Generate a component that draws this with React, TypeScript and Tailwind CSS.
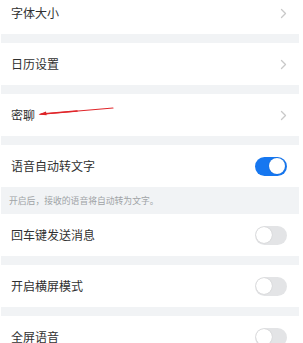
import React from "react";

const Chevron = () => (
    <svg width="7" height="11" viewBox="0 0 7 11" fill="none">
        <path d="M1.5 1.5 L5.5 5.5 L1.5 9.5" stroke="#c9c9c9" strokeWidth="1.3" strokeLinecap="round" strokeLinejoin="round" />
    </svg>
);

const Toggle = ({ on }: { on: boolean }) => (
    <div
        className={
            on
                ? "w-[32px] h-[19px] rounded-full bg-[#1677f0] flex items-center justify-end px-[2px]"
                : "w-[32px] h-[19px] rounded-full bg-[#e3e4e6] flex items-center justify-start px-[1px]"
        }
    >
        <div className="w-[16px] h-[16px] rounded-full bg-white shadow-[0_0_1px_rgba(0,0,0,0.25)]" />
    </div>
);

const Row = ({ label, right, extra }: { label: string; right: React.ReactNode; extra?: React.ReactNode }) => (
    <div className="relative h-[42px] bg-white flex items-center justify-between pl-[10px] pr-[12px]">
        <span className="text-[12px] text-[#303030]">{label}</span>
        {extra}
        {right}
    </div>
);

const Gap = () => <div className="h-[9px]" />;

const RedArrow = () => (
    <svg className="absolute left-[36px] top-[12px]" width="80" height="12" viewBox="0 0 80 12" fill="none">
        <path d="M3 8.2 L76 2" stroke="#e0262a" strokeWidth="1.1" strokeLinecap="round" />
        <path d="M1.5 8.4 L9 5.6 L9.6 9.2 Z" fill="#d81e22" />
        <path d="M5 8 L40 5" stroke="#e0262a" strokeWidth="1.6" strokeLinecap="round" />
    </svg>
);

export default function App() {
    return (
        <div className="w-[303px] h-[343px] overflow-hidden bg-white pl-[1px] pr-[4px]" style={{ fontFamily: '"Noto Sans CJK SC", "Noto Sans", sans-serif' }}>
            <div className="bg-[#f1f3f5] -mt-[8px]">
                <Row label="字体大小" right={<Chevron />} />
                <Gap />
                <Row label="日历设置" right={<Chevron />} />
                <Gap />
                <Row label="密聊" right={<Chevron />} extra={<RedArrow />} />
                <Gap />
                <Row label="语音自动转文字" right={<Toggle on={true} />} />
                <div className="h-[27px] flex items-center pl-[8px]">
                    <span className="text-[8.8px] text-[#a0a3a6]">开启后，接收的语音将自动转为文字。</span>
                </div>
                <Row label="回车键发送消息" right={<Toggle on={false} />} />
                <Gap />
                <Row label="开启横屏模式" right={<Toggle on={false} />} />
                <Gap />
                <Row label="全屏语音" right={<Toggle on={false} />} />
            </div>
        </div>
    );
}
